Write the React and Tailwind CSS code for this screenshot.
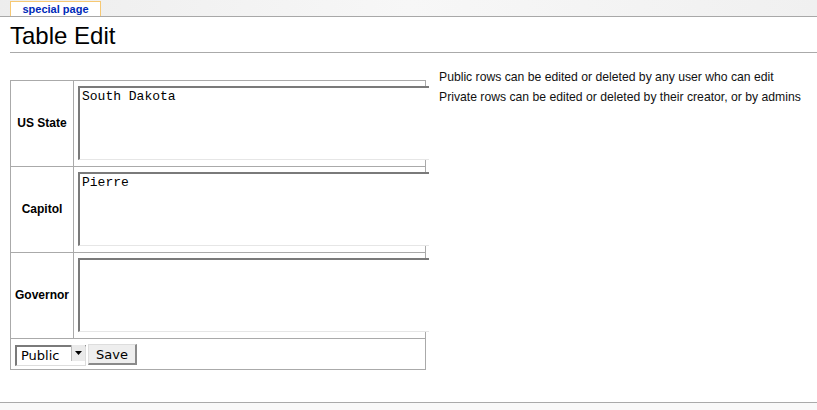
const rows = [
  { label: 'US State', value: 'South Dakota' },
  { label: 'Capitol', value: 'Pierre' },
  { label: 'Governor', value: '' },
];

const FieldRow = ({ label, value }) => (
  <div className="flex border-b border-[#aaa]">
    <div className="w-[63px] shrink-0 border-r border-[#aaa] flex items-center justify-center pb-[2px] text-[12px] font-bold text-black">
      {label}
    </div>
    <div className="flex-1 pl-[4px] pt-[5px] pb-[6px] overflow-visible">
      <textarea
        defaultValue={value}
        readOnly
        className="block w-[351px] h-[74px] resize-none bg-white border-t-2 border-l-2 border-b border-r-0 border-t-[#7a7a7a] border-l-[#7a7a7a] border-b-[#e6e6e6] px-[2px] pt-[1px] text-[13px] leading-[15px] text-black outline-none"
        style={{ fontFamily: '"Liberation Mono", "Courier New", monospace' }}
      />
    </div>
  </div>
);

export default function App() {
  return (
    <div
      className="w-[817px] h-[410px] bg-white flex flex-col overflow-hidden text-black"
      style={{ fontFamily: '"Liberation Sans", Arial, sans-serif' }}
    >
      <div className="h-[17px] shrink-0 border-b border-[#a8a8a8] bg-gradient-to-r from-[#ededed] via-[#f7f7f7] to-[#f0f0f0] flex items-end pl-[10px]">
        <div className="h-[15px] w-[91px] bg-white border border-b-0 border-[#f6c873] flex items-start justify-center">
          <span className="text-[11px] leading-[12px] font-bold text-[#002bb8] pt-[1px]">special page</span>
        </div>
      </div>

      <div className="ml-[10px] pt-[4px] pb-[2px] border-b border-[#aaa]">
        <h1 className="text-[24px] leading-[29px] font-normal">Table Edit</h1>
      </div>

      <div className="flex items-start ml-[10px] pt-[14px]">
        <div className="w-[416px] mt-[13px] border border-b-0 border-[#aaa] shrink-0">
          {rows.map((r) => (
            <FieldRow key={r.label} label={r.label} value={r.value} />
          ))}
          <div className="h-[31px] border-b border-[#aaa] flex items-start pl-[4px] pt-[4px] gap-[2px]">
            <div className="relative w-[71px] h-[21px]">
              <select
                defaultValue="Public"
                className="appearance-none w-full h-full bg-white border-t-2 border-l-2 border-b border-r border-t-[#7a7a7a] border-l-[#7a7a7a] border-b-[#ddd] border-r-[#ddd] pl-[4px] text-[13px] leading-[17px] outline-none"
                style={{ fontFamily: '"DejaVu Sans", "Liberation Sans", sans-serif' }}
              >
                <option>Public</option>
                <option>Private</option>
              </select>
              <div className="absolute right-[1px] top-[2px] w-[14px] h-[16px] bg-[#eaeaea] border-l border-[#bbb] flex items-center justify-center pointer-events-none">
                <svg width="7" height="4" viewBox="0 0 7 4"><path d="M0 0h7L3.5 4z" fill="#000" /></svg>
              </div>
            </div>
            <button
              className="mt-[1px] w-[49px] h-[21px] bg-[#eeeeee] border-t border-l border-b-2 border-r-2 border-t-[#ddd] border-l-[#ddd] border-b-[#8a8a8a] border-r-[#8a8a8a] text-[13px] leading-[17px]"
              style={{ fontFamily: '"DejaVu Sans", "Liberation Sans", sans-serif' }}
            >
              Save
            </button>
          </div>
        </div>
        <div className="ml-[13px] text-[12.2px] leading-[20px] text-[#111]">
          <p>Public rows can be edited or deleted by any user who can edit</p>
          <p>Private rows can be edited or deleted by their creator, or by admins</p>
        </div>
      </div>

      <div className="flex-1" />
      <div className="h-[8px] shrink-0 border-t border-[#aaa] bg-[#f9f9f9]" />
    </div>
  );
}
